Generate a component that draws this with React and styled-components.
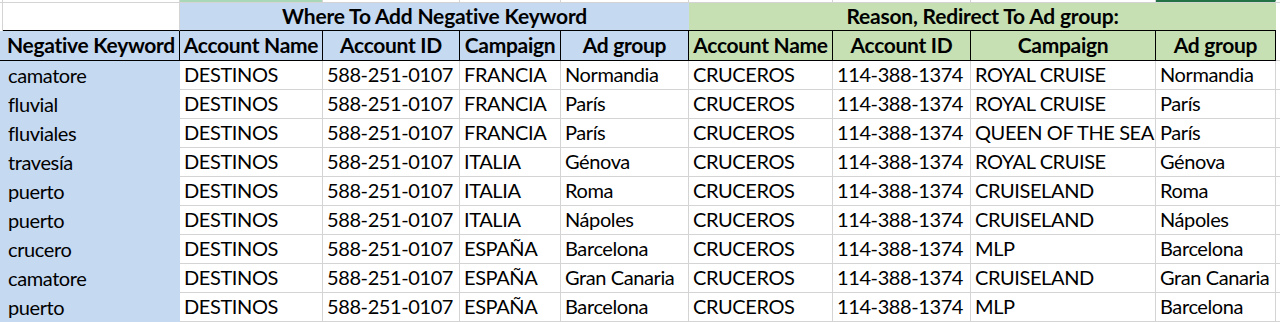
import { Fragment } from "react";
import styled, { createGlobalStyle } from "styled-components";

const GlobalStyle = createGlobalStyle`
  html, body {
    margin: 0;
    padding: 0;
    background: #ffffff;
  }
  body {
    font-family: "Lato", "Open Sans", sans-serif;
    color: #000000;
  }
`;

const BLUE = "#c5d9f1";
const GREEN = "#c6e0b4";
const GRID = "#d4d4d4";

const Sheet = styled.div`
  display: grid;
  grid-template-columns: 3px 177px 143px 137px 101px 128px 144px 138px 185px 120px 4px;
  grid-template-rows: 3px 28px 30px repeat(9, 29px);
  width: 1280px;
  height: 322px;
  overflow: hidden;
  font-size: 20px;
  letter-spacing: -0.4px;
`;

const Strip = styled.div`
  box-sizing: border-box;
  border-right: ${(p) => (p.$last ? "none" : `1px solid ${GRID}`)};
  border-bottom: 1px solid ${GRID};
  background: ${(p) => p.$fill || "#ffffff"};
  border-top: ${(p) => (p.$selected ? "2px solid #217346" : "none")};
`;

const GroupCell = styled.div`
  box-sizing: border-box;
  grid-column: ${(p) => p.$span || "auto"};
  background: ${(p) => p.$fill || "#ffffff"};
  border-right: ${(p) => (p.$fill ? "none" : `1px solid ${GRID}`)};
  border-bottom: 1px solid #000000;
  font-weight: 700;
  font-size: 21px;
  letter-spacing: -0.2px;
  display: flex;
  align-items: flex-end;
  justify-content: center;
  padding-bottom: 2px;
  white-space: nowrap;
`;

const HeadCell = styled.div`
  box-sizing: border-box;
  background: ${(p) => p.$fill};
  border-right: 1px solid #000000;
  border-bottom: 1px solid #000000;
  font-weight: 700;
  font-size: 21px;
  letter-spacing: -0.3px;
  display: flex;
  align-items: flex-end;
  justify-content: center;
  padding-bottom: 3px;
  white-space: nowrap;
`;

const Cell = styled.div`
  box-sizing: border-box;
  background: ${(p) => p.$fill || "#ffffff"};
  border-right: ${(p) => (p.$fill ? "none" : `1px solid ${GRID}`)};
  border-bottom: ${(p) => (p.$fill ? "none" : `1px solid ${GRID}`)};
  display: flex;
  align-items: flex-end;
  padding: 0 0 3px ${(p) => (p.$first ? "5px" : "4px")};
  white-space: nowrap;
`;

const Edge = styled.div`
  box-sizing: border-box;
  background: ${(p) => p.$fill || "#ffffff"};
  border-right: ${(p) => (p.$grid ? `1px solid ${GRID}` : "none")};
  border-bottom: ${(p) => (p.$line ? `1px solid ${p.$line}` : "none")};
`;

const headers = [
  ["Negative Keyword", BLUE],
  ["Account Name", BLUE],
  ["Account ID", BLUE],
  ["Campaign", BLUE],
  ["Ad group", BLUE],
  ["Account Name", GREEN],
  ["Account ID", GREEN],
  ["Campaign", GREEN],
  ["Ad group", GREEN],
];

const rows = [
  ["camatore", "FRANCIA", "Normandia", "ROYAL CRUISE", "Normandia"],
  ["fluvial", "FRANCIA", "París", "ROYAL CRUISE", "París"],
  ["fluviales", "FRANCIA", "París", "QUEEN OF THE SEA", "París"],
  ["travesía", "ITALIA", "Génova", "ROYAL CRUISE", "Génova"],
  ["puerto", "ITALIA", "Roma", "CRUISELAND", "Roma"],
  ["puerto", "ITALIA", "Nápoles", "CRUISELAND", "Nápoles"],
  ["crucero", "ESPAÑA", "Barcelona", "MLP", "Barcelona"],
  ["camatore", "ESPAÑA", "Gran Canaria", "CRUISELAND", "Gran Canaria"],
  ["puerto", "ESPAÑA", "Barcelona", "MLP", "Barcelona"],
];

function App() {
  return (
    <>
      <GlobalStyle />
      <Sheet>
        {/* partial row above the table */}
        <Strip />
        <Strip />
        <Strip $fill="#a9d8b9" />
        {Array.from({ length: 6 }).map((_, i) => (
          <Strip key={i} />
        ))}
        <Strip $selected />
        <Strip $last />

        {/* group titles */}
        <Edge $grid />
        <GroupCell />
        <GroupCell $span="span 4" $fill={BLUE}>
          Where To Add Negative Keyword
        </GroupCell>
        <GroupCell $span="span 4" $fill={GREEN}>
          Reason, Redirect To Ad group:
        </GroupCell>
        <Edge />

        {/* column headers */}
        <Edge $fill={BLUE} $line="#000000" />
        {headers.map(([label, fill], i) => (
          <HeadCell key={i} $fill={fill}>
            {label}
          </HeadCell>
        ))}
        <Edge $line={GRID} />

        {rows.map((r, i) => (
          <Fragment key={i}>
            <Edge $fill={BLUE} />
            <Cell $fill={BLUE} $first>
              {r[0]}
            </Cell>
            <Cell>DESTINOS</Cell>
            <Cell>588-251-0107</Cell>
            <Cell>{r[1]}</Cell>
            <Cell>{r[2]}</Cell>
            <Cell>CRUCEROS</Cell>
            <Cell>114-388-1374</Cell>
            <Cell>{r[3]}</Cell>
            <Cell>{r[4]}</Cell>
            <Edge $line={GRID} />
          </Fragment>
        ))}
      </Sheet>
    </>
  );
}

export default App;
